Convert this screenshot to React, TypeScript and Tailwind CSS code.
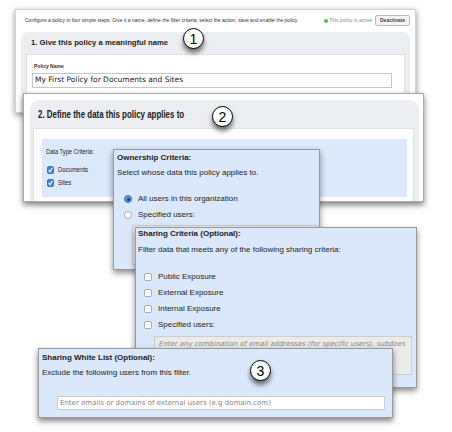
import React from "react";

const sans = "font-['Helvetica_Neue','Liberation_Sans',Arial,sans-serif]";
const verdana = "font-['DejaVu_Sans','Liberation_Sans',sans-serif]";

function Step({ n, className }: { n: number; className: string }) {
  return (
    <div
      className={`absolute z-50 w-[21px] h-[21px] rounded-full bg-white border-[1.5px] border-black flex items-center justify-center shadow-[0_4px_5px_rgba(0,0,0,0.55)] ${sans} text-[14px] leading-none text-black ${className}`}
    >
      {n}
    </div>
  );
}

function BlueCheck() {
  return (
    <svg width="7" height="8" viewBox="0 0 7 8" className="shrink-0">
      <rect x="0.5" y="0.5" width="6" height="7" rx="1.2" fill="#4a83d6" stroke="#2f5fa8" strokeWidth="0.8" />
      <path d="M1.7 4.2 L3 5.8 L5.4 1.8" stroke="#fff" strokeWidth="1.1" fill="none" />
    </svg>
  );
}

function Radio({ on }: { on?: boolean }) {
  return on ? (
    <span className="w-[8px] h-[8px] rounded-full bg-[#5a94e0] border border-[#3a70c0] flex items-center justify-center shrink-0">
      <span className="w-[3px] h-[3px] rounded-full bg-[#1b3d78]" />
    </span>
  ) : (
    <span className="w-[8px] h-[8px] rounded-full bg-white border border-[#aaa] shrink-0" />
  );
}

function Box() {
  return <span className="w-[8px] h-[8px] rounded-[2px] bg-white border border-[#aaa] shrink-0" />;
}

export default function App() {
  return (
    <div className="relative w-[452px] h-[432px] bg-white overflow-hidden text-[#222]">
      {/* Panel 1 */}
      <div className="absolute left-[15px] top-[9px] w-[401px] h-[104px] bg-white border border-[#d4d4d4] shadow-[0_2px_6px_rgba(0,0,0,0.45)] flex flex-col px-[5px]">
        <div className={`flex items-center h-[21px] pl-[4px] ${sans}`}>
          <span className="text-[5px] text-[#333] flex-1">
            Configure a policy in four simple steps. Give it a name, define the filter criteria, select the action, save and enable the policy.
          </span>
          <span className="w-[4px] h-[4px] rounded-full bg-[#4cc23a] mr-[1px]" />
          <span className="text-[5px] italic text-[#8a8a8a] mr-[3px]">This policy is active</span>
          <span className="h-[11px] px-[4px] flex items-center border border-[#bbb] rounded-[2px] bg-[#f4f4f4] text-[5px] font-bold text-[#444]">
            Deactivate
          </span>
        </div>
        <div className="mt-[1px] flex-1 bg-[#eceef2] rounded-t-[7px] flex flex-col px-[5px]">
          <div className={`h-[22px] flex items-center pl-[5px] ${sans} text-[7.7px] font-bold text-[#222]`}>
            1. Give this policy a meaningful name
          </div>
          <div className="flex-1 bg-white border border-[#e0e0e0] border-b-0 px-[5px] pt-[8px]">
            <div className={`${sans} text-[5px] font-bold text-[#333] pl-[2px]`}>Policy Name</div>
            <div className={`mt-[2px] h-[15px] w-[360px] border border-[#c8c8c8] flex items-center pl-[2px] ${verdana} text-[7.5px] text-[#222]`}>
              My First Policy for Documents and Sites
            </div>
          </div>
        </div>
      </div>

      {/* Panel 2 */}
      <div className="absolute left-[23px] top-[93px] w-[401px] h-[109px] bg-white border border-[#aaa] shadow-[0_3px_6px_rgba(0,0,0,0.5)] pl-[6px] pr-[4px] pt-[6px]">
        <div className="h-full bg-[#eceef2] rounded-t-[9px] flex flex-col pl-[3px] pr-[5px]">
          <div className={`h-[28px] flex items-center pl-[5px] ${sans} text-[#1a1a1a]`}>
            <span className="inline-block origin-left scale-x-[0.72] text-[11px] font-bold whitespace-nowrap">
              2. Define the data this policy applies to
            </span>
          </div>
          <div className="flex-1 bg-white border border-[#e2e2e2] border-b-0 pl-[8px] pr-[6px] pt-[10px]">
            <div className={`h-[58px] bg-[#dbe9fb] pl-[4px] pt-[9px] ${sans} text-[7px] leading-[8px] text-[#222]`}>
              <div className="inline-block origin-left scale-x-[0.82] whitespace-nowrap">Data Type Criteria:</div>
              <div className="mt-[10px] flex items-center gap-[4px] pl-[1px]">
                <BlueCheck />
                <span className="inline-block origin-left scale-x-[0.85]">Documents</span>
              </div>
              <div className="mt-[5px] flex items-center gap-[4px] pl-[1px]">
                <BlueCheck />
                <span className="inline-block origin-left scale-x-[0.85]">Sites</span>
              </div>
            </div>
          </div>
        </div>
      </div>

      {/* Ownership Criteria */}
      <div className={`absolute left-[113px] top-[149px] w-[207px] h-[121px] bg-[#dbe8fb] border border-[#9a9a9a] shadow-[0_3px_6px_rgba(0,0,0,0.45)] pl-[3px] pt-[3px] ${sans} text-[8px] leading-[10px] text-[#222]`}>
        <div className="font-bold">Ownership Criteria:</div>
        <div className="mt-[5px]">Select whose data this policy applies to.</div>
        <div className="mt-[16px] h-[10px] pl-[7px] flex items-center gap-[6px]">
          <Radio on />
          <span>All users in this organization</span>
        </div>
        <div className="mt-[6px] h-[10px] pl-[7px] flex items-center gap-[6px]">
          <Radio />
          <span>Specified users:</span>
        </div>
        <div className="mt-[5px] ml-[15px] w-[185px] h-[40px] bg-[#ebebeb] border border-[#ccc]" />
      </div>

      {/* Sharing Criteria */}
      <div className={`absolute left-[135px] top-[227px] w-[282px] h-[161px] bg-[#dbe8fb] border border-[#9a9a9a] shadow-[0_3px_6px_rgba(0,0,0,0.45)] pl-[2px] pt-[1px] ${sans} text-[8px] leading-[10px] text-[#222]`}>
        <div className="font-bold">Sharing Criteria (Optional):</div>
        <div className="mt-[6px]">Filter data that meets any of the following sharing criteria:</div>
        <div className="mt-[17px] pl-[6px] flex flex-col gap-[6px]">
          {["Public Exposure", "External Exposure", "Internal Exposure", "Specified users:"].map((t) => (
            <div key={t} className="h-[10px] flex items-center gap-[6px]">
              <Box />
              <span>{t}</span>
            </div>
          ))}
        </div>
        <div className={`mt-[6px] ml-[16px] w-[258px] h-[39px] bg-[#ebebeb] border border-[#ccc] pl-[4px] pt-[3px] ${verdana} text-[6.95px] leading-[9px] italic text-[#888] whitespace-nowrap overflow-hidden`}>
          Enter any combination of email addresses (for specific users), subdoes
        </div>
      </div>

      {/* Sharing White List */}
      <div className={`absolute left-[38px] top-[348px] w-[355px] h-[70px] bg-[#dbe8fb] border border-[#9a9a9a] shadow-[0_3px_6px_rgba(0,0,0,0.5)] pl-[3px] pt-[4px] ${sans} text-[8px] leading-[10px] text-[#222]`}>
        <div className="font-bold">Sharing White List (Optional):</div>
        <div className="mt-[5px]">Exclude the following users from this filter.</div>
        <div className={`mt-[18px] ml-[15px] w-[328px] h-[14px] bg-white border border-[#ccc] flex items-center pl-[2px] ${verdana} text-[7px] text-[#888]`}>
          Enter emails or domains of external users (e.g domain.com)
        </div>
      </div>

      <Step n={1} className="left-[183px] top-[28px]" />
      <Step n={2} className="left-[212px] top-[106px]" />
      <Step n={3} className="left-[250px] top-[360px]" />
    </div>
  );
}
